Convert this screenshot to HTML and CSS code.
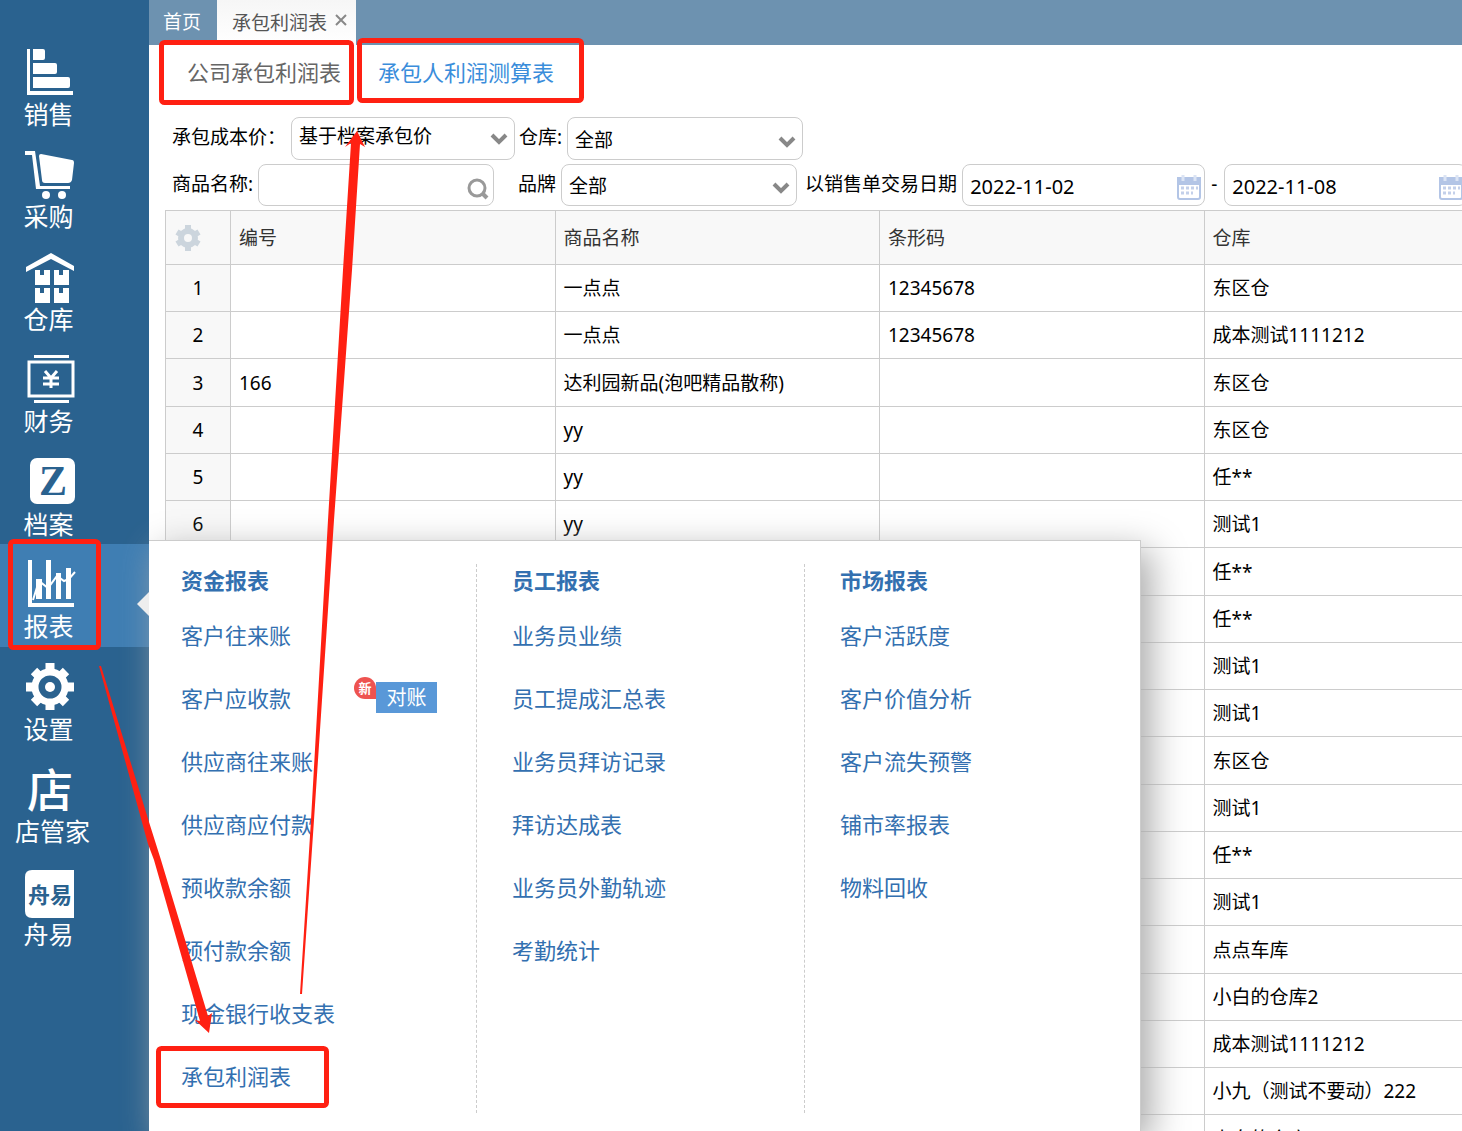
FILE: index.html
```html
<!DOCTYPE html>
<html lang="zh-CN">
<head>
<meta charset="utf-8">
<title>承包利润表</title>
<link rel="stylesheet" href="styles.css">
</head>
<body>
<div class="app">
  <nav class="sidebar">
    <a class="nav-item" href="#"><svg class="nav-icon" viewBox="0 0 48 48"><path d="M2 1h3v42h43v4H2z"/><path d="M8 1h10q2 0 2 2v7q0 2-2 2H8zM8 15h22q2 0 2 2v7q0 2-2 2H8zM8 29h35q2 0 2 2v7q0 2-2 2H8z"/></svg><span>销售</span></a>
    <a class="nav-item" href="#"><svg class="nav-icon" viewBox="0 0 48 48"><path d="M0 1H10l5 35h30v3H11L7 5H0z"/><path d="M14 6q0-2 2-2l31 6q2 0 2 3l-2 17q-1 3-4 3H20q-3 0-3-3z"/><circle cx="21" cy="45" r="4"/><circle cx="37" cy="45" r="4"/></svg><span>采购</span></a>
    <a class="nav-item" href="#"><svg class="nav-icon" viewBox="0 0 48 48"><path d="M1 14L26 0l23 13v5L26 6 1 19z"/><path d="M10 17h5v5h4v-5h6v15H10zM29 17h5v5h4v-5h6v15H29zM10 35h5v5h4v-5h6v15H10zM29 35h5v5h4v-5h6v15H29z"/></svg><span>仓库</span></a>
    <a class="nav-item" href="#"><svg class="nav-icon" viewBox="0 0 48 48"><path d="M9 0h35v3H9zM9 45h35v3H9z"/><path class="line" d="M4 7h44v34H4zM20 16l6 7 6-7M26 23v10M18 23h16M18 29h16"/></svg><span>财务</span></a>
    <a class="nav-item" href="#"><svg class="nav-icon" viewBox="0 0 48 48"><rect x="5" y="0" width="45" height="46" rx="7"/><text class="glyph-z" x="28" y="37">Z</text></svg><span>档案</span></a>
    <a class="nav-item active" href="#"><svg class="nav-icon" viewBox="0 0 48 48"><path d="M3 0h4v43h42v4H3z"/><path d="M11 19h6v20h-6zM21 0h5v39h-5zM31 13h5v26h-5zM41 8h5v31h-5z"/><path class="thin" d="M8 40l6-19 9 7 9-12 7 5 5-2 6-7"/></svg><span>报表</span></a>
    <a class="nav-item" href="#"><svg class="nav-icon" viewBox="0 0 48 48"><circle class="gear-ring" cx="25" cy="24" r="15"/><circle cx="25" cy="24" r="5"/><path class="gear-teeth" d="M25 0v10M25 38v9M1 24h9M40 24h9M9 8l6 6M35 34l6 6M9 40l6-6M35 14l6-6"/></svg><span>设置</span></a>
    <a class="nav-item" href="#"><svg class="nav-icon" viewBox="0 0 48 48"><text class="glyph-shop" x="25" y="42">店</text></svg><span>店管家</span></a>
    <a class="nav-item" href="#"><svg class="nav-icon" viewBox="0 0 48 48"><path d="M7 2h42v48H7q-7 0-7-7V9q0-7 7-7z"/><text class="glyph-zy" x="25" y="35">舟易</text></svg><span>舟易</span></a>
  </nav>

  <main class="main">
    <div class="tabbar">
      <a class="tab" href="#">首页</a>
      <div class="tab current"><span>承包利润表</span><button class="close" type="button" aria-label="关闭"><svg viewBox="0 0 12 12"><path d="M1 1l10 10M11 1L1 11"/></svg></button></div>
    </div>

    <div class="subtabs">
      <a class="subtab" href="#">公司承包利润表</a>
      <a class="subtab selected" href="#">承包人利润测算表</a>
    </div>

    <form class="filters">
      <div class="filter-row">
        <label class="cost-label" for="cost">承包成本价：</label>
        <div class="field cost"><select id="cost"><option>基于档案承包价</option></select><svg class="chevron" viewBox="0 0 18 12"><path d="M2 2l7 7 7-7"/></svg></div>
        <label class="second-label" for="store">仓库:</label>
        <div class="field"><select id="store"><option>全部</option></select><svg class="chevron" viewBox="0 0 18 12"><path d="M2 2l7 7 7-7"/></svg></div>
      </div>
      <div class="filter-row">
        <label for="goods">商品名称:</label>
        <div class="field goods"><input id="goods" type="text"><svg class="search" viewBox="0 0 22 22"><circle cx="10" cy="10" r="8"/><path class="handle" d="M16 16l4 4"/></svg></div>
        <label class="second-label" for="brand">品牌</label>
        <div class="field"><select id="brand"><option>全部</option></select><svg class="chevron" viewBox="0 0 18 12"><path d="M2 2l7 7 7-7"/></svg></div>
        <label class="date-label" for="from">以销售单交易日期</label>
        <div class="field date"><input id="from" type="text" value="2022-11-02"><svg class="calendar" viewBox="0 0 24 26"><rect class="sheet" x="1" y="3" width="22" height="21" rx="2"/><path class="head" d="M0 2h24v8H0z"/><path class="ring" d="M6 0v6M18 0v6"/><path class="days" d="M4 13h17M4 18h12"/></svg></div>
        <label class="dash" for="to">-</label>
        <div class="field date"><input id="to" type="text" value="2022-11-08"><svg class="calendar" viewBox="0 0 24 26"><rect class="sheet" x="1" y="3" width="22" height="21" rx="2"/><path class="head" d="M0 2h24v8H0z"/><path class="ring" d="M6 0v6M18 0v6"/><path class="days" d="M4 13h17M4 18h12"/></svg></div>
      </div>
    </form>

    <table class="grid">
      <colgroup><col class="col-num"><col class="col"><col class="col"><col class="col"><col class="col"></colgroup>
      <thead>
        <tr><th class="num"><svg class="cog" viewBox="0 0 26 26"><circle cx="13" cy="13" r="7"/><path d="M13 0v6M13 20v6M2 7l5 3M19 16l5 3M2 19l5-3M19 10l5-3"/></svg></th><th>编号</th><th>商品名称</th><th>条形码</th><th>仓库</th></tr>
      </thead>
      <tbody>
        <tr><td class="num">1</td><td></td><td>一点点</td><td>12345678</td><td>东区仓</td></tr>
        <tr><td class="num">2</td><td></td><td>一点点</td><td>12345678</td><td>成本测试1111212</td></tr>
        <tr><td class="num">3</td><td>166</td><td>达利园新品(泡吧精品散称)</td><td></td><td>东区仓</td></tr>
        <tr><td class="num">4</td><td></td><td>yy</td><td></td><td>东区仓</td></tr>
        <tr><td class="num">5</td><td></td><td>yy</td><td></td><td>任**</td></tr>
        <tr><td class="num">6</td><td></td><td>yy</td><td></td><td>测试1</td></tr>
        <tr><td class="num"></td><td></td><td></td><td></td><td>任**</td></tr>
        <tr><td class="num"></td><td></td><td></td><td></td><td>任**</td></tr>
        <tr><td class="num"></td><td></td><td></td><td></td><td>测试1</td></tr>
        <tr><td class="num"></td><td></td><td></td><td></td><td>测试1</td></tr>
        <tr><td class="num"></td><td></td><td></td><td></td><td>东区仓</td></tr>
        <tr><td class="num"></td><td></td><td></td><td></td><td>测试1</td></tr>
        <tr><td class="num"></td><td></td><td></td><td></td><td>任**</td></tr>
        <tr><td class="num"></td><td></td><td></td><td></td><td>测试1</td></tr>
        <tr><td class="num"></td><td></td><td></td><td></td><td>点点车库</td></tr>
        <tr><td class="num"></td><td></td><td></td><td></td><td>小白的仓库2</td></tr>
        <tr><td class="num"></td><td></td><td></td><td></td><td>成本测试1111212</td></tr>
        <tr><td class="num"></td><td></td><td></td><td></td><td>小九（测试不要动）222</td></tr>
        <tr><td class="num"></td><td></td><td></td><td></td><td>小白的仓库2</td></tr>
      </tbody>
    </table>
  </main>

  <div class="flyout">
    <section class="menu-col">
      <h2>资金报表</h2>
      <a href="#">客户往来账</a>
      <div class="menu-line"><a href="#">客户应收款</a><span class="new">新</span><button class="reconcile" type="button">对账</button></div>
      <a href="#">供应商往来账</a>
      <a href="#">供应商应付款</a>
      <a href="#">预收款余额</a>
      <a href="#">预付款余额</a>
      <a href="#">现金银行收支表</a>
      <a href="#">承包利润表</a>
    </section>
    <section class="menu-col">
      <h2>员工报表</h2>
      <a href="#">业务员业绩</a>
      <a href="#">员工提成汇总表</a>
      <a href="#">业务员拜访记录</a>
      <a href="#">拜访达成表</a>
      <a href="#">业务员外勤轨迹</a>
      <a href="#">考勤统计</a>
    </section>
    <section class="menu-col">
      <h2>市场报表</h2>
      <a href="#">客户活跃度</a>
      <a href="#">客户价值分析</a>
      <a href="#">客户流失预警</a>
      <a href="#">铺市率报表</a>
      <a href="#">物料回收</a>
    </section>
  </div>

  <svg class="marks" width="600" height="1120" viewBox="0 0 600 1120" aria-hidden="true">
    <g class="mark-box">
      <rect x="161.500" y="42.500" width="190" height="60" rx="3"/>
      <rect x="359.500" y="40.500" width="222" height="60" rx="3"/>
      <rect x="10.500" y="541.500" width="88" height="106" rx="3"/>
      <rect x="158.500" y="1048.500" width="168" height="57" rx="3"/>
    </g>
    <path class="mark-arrow" d="M99 666L101 666L149 822L161 860L208 1016L212 1013L209 1033L195 1020L200 1021L154 860L148 844Z"/>
    <path class="mark-arrow" d="M300 994L302 994L314 820L334 520L352 270L360 144L365 147L357 131L345 147L351 143L343 270L328 520L311 820Z"/>
  </svg>
</div>
</body>
</html>
```
FILE: styles.css
```css
* { box-sizing: border-box; }

body {
  margin: 0;
  background: #fff;
  color: #000;
  font: 19px/28px "Noto Sans", "Noto Sans CJK SC", sans-serif;
}

a { color: inherit; text-decoration: none; }

button, input, select { font: inherit; color: inherit; }

.app {
  position: relative;
  display: flex;
  height: 100vh;
  overflow: hidden;
}

/* Sidebar */
.sidebar {
  flex: none;
  width: 149px;
  padding-top: 32px;
  background: #2a628f;
  color: #fff;
}

.nav-item {
  display: flex;
  flex-direction: column;
  align-items: safe center;
  height: 102px;
  padding: 16px 67px 0 15px;
  font-size: 25px;
  line-height: 36px;
  white-space: nowrap;
}

.nav-item:nth-child(even) { height: 103px; }
.nav-item.active { background: #3f7eb3; }

.nav-icon {
  flex: none;
  width: 48px;
  height: 48px;
  fill: #fff;
  overflow: visible;
}

.nav-icon .line { fill: none; stroke: #fff; stroke-width: 3; }
.nav-icon .thin { fill: none; stroke: #fff; stroke-width: 2; }
.nav-icon .gear-ring { fill: none; stroke: #fff; stroke-width: 7; }
.nav-icon .gear-teeth { stroke: #fff; stroke-width: 9; }
.nav-icon text { text-anchor: middle; font-weight: 700; }
.nav-icon .glyph-z { fill: #2a628f; font-family: "Liberation Serif", serif; font-size: 42px; }
.nav-icon .glyph-shop { font-size: 46px; font-weight: 500; }
.nav-icon .glyph-zy { fill: #2a628f; font-size: 22px; }

/* Tabs */
.main { flex: 1; min-width: 0; overflow: hidden; }

.tabbar {
  display: flex;
  height: 45px;
  background: #6d92b0;
  color: #fff;
  line-height: 44px;
}

.tab { padding: 0 16px 0 14px; }

.tab.current {
  display: flex;
  align-items: center;
  gap: 8px;
  padding: 0 9px 0 15px;
  background: linear-gradient(#f6f6f6, #fff);
  color: #555;
}

.close {
  display: flex;
  width: 12px;
  height: 18px;
  padding: 0 0 6px;
  border: 0;
  background: none;
}

.close svg { width: 12px; height: 12px; fill: none; stroke: #888; stroke-width: 2; }

.subtabs {
  display: flex;
  gap: 37px;
  height: 72px;
  padding: 11px 38px;
  color: #666;
  font-size: 22px;
  line-height: 32px;
}

.subtab.selected { color: #3a8ddb; }

/* Filters */
.filters {
  display: flex;
  flex-direction: column;
  gap: 4px;
  padding: 0 0 4px 23px;
}

.filter-row { display: flex; white-space: nowrap; }
.filter-row label { flex: none; padding: 6px 5px 0 0; }
.filter-row .cost-label { width: 119px; padding-right: 0; }
.filter-row .second-label { padding-left: 4px; }
.filter-row .date-label { padding-left: 8px; }
.filter-row .dash { padding: 6px 7px 0 6px; }

.field {
  display: grid;
  flex: none;
  align-items: center;
  width: 236px;
  height: 42px;
  border: 1px solid #ccc;
  border-radius: 8px;
}

.filter-row:first-child .field { height: 43px; }
.field.cost { width: 224px; }
.field.goods { margin-right: 20px; }
.field.date { width: 243px; font-size: 20px; }

.field > * { grid-area: 1 / 1; }

.field select, .field input {
  width: 100%;
  height: 40px;
  padding: 2px 7px 0;
  border: 0;
  outline: 0;
  background: none;
  appearance: none;
}

.field.cost select { padding: 0 7px 6px; }

.field svg { justify-self: end; pointer-events: none; fill: none; }
.chevron { width: 18px; height: 12px; margin: 6px 6px 0 0; stroke: #888; stroke-width: 4; }
.field.cost .chevron { margin-top: 0; }
.search { width: 22px; height: 22px; margin: 7px 4px 0 0; stroke: #999; stroke-width: 3; }
.search .handle { stroke-width: 4; }
.calendar { width: 24px; height: 26px; margin: 6px 3px 0 0; }
.calendar .sheet { fill: #fff; stroke: #b3c5e6; stroke-width: 2; }
.calendar .head { fill: #b3c5e6; }
.calendar .ring { stroke: #dbe4f4; stroke-width: 3; }
.calendar .days { stroke: #c3d0ea; stroke-width: 3; stroke-dasharray: 3 2; }

/* Data grid */
.grid {
  width: 1364px;
  margin-left: 16px;
  border-collapse: collapse;
  table-layout: fixed;
}

.col-num { width: 65px; }

.grid th, .grid td {
  height: 47px;
  padding: 0 8px;
  border: 1px solid #ccc;
  font-weight: 400;
  text-align: left;
}

.grid tr:nth-child(4n+3) td { height: 48px; }
.grid th { height: 54px; background: #f8f8f8; color: #333; }
.grid .num { background: #f8f8f8; text-align: center; }

.cog { display: block; width: 26px; height: 26px; margin-left: 1px; fill: none; stroke: #ccd5dd; stroke-width: 6; }

/* Report menu */
.flyout {
  position: absolute;
  top: 540px;
  left: 149px;
  display: grid;
  grid-template-columns: 296px 293px 1fr;
  gap: 35px;
  width: 992px;
  padding: 23px 32px 18px;
  border: 1px solid #ccc;
  border-left: 0;
  background: #fff;
  box-shadow: 10px 10px 34px #aaa;
  color: #3370b0;
  font-size: 22px;
  line-height: 32px;
}

.flyout::before {
  content: "";
  position: absolute;
  top: 51px;
  left: -12px;
  border: solid transparent;
  border-width: 12px 12px 12px 0;
  border-right-color: #eee;
}

.menu-col {
  display: flex;
  flex-direction: column;
  align-items: flex-start;
  gap: 31px;
  height: 549px;
}

.menu-col:not(:last-child) { border-right: 1px dashed #ccc; }

.menu-col h2 { margin: 0 0 -8px; font-size: 22px; line-height: 32px; }

.menu-line { display: flex; height: 32px; }

.new {
  width: 22px;
  height: 22px;
  margin: -5px 0 0 63px;
  border-radius: 11px 11px 0 11px;
  background: #ee5350;
  color: #fff;
  font-size: 13px;
  font-weight: 700;
  line-height: 22px;
  text-align: center;
}

.reconcile {
  width: 61px;
  height: 31px;
  padding: 0;
  border: 0;
  background: #5998d8;
  color: #fff;
  font-size: 20px;
  line-height: 31px;
}

/* Red call-outs drawn over the page */
.marks { position: absolute; top: 0; left: 0; pointer-events: none; }
.mark-box { fill: none; stroke: #ff2012; stroke-width: 5; }
.mark-arrow { fill: #ff2012; }
```
